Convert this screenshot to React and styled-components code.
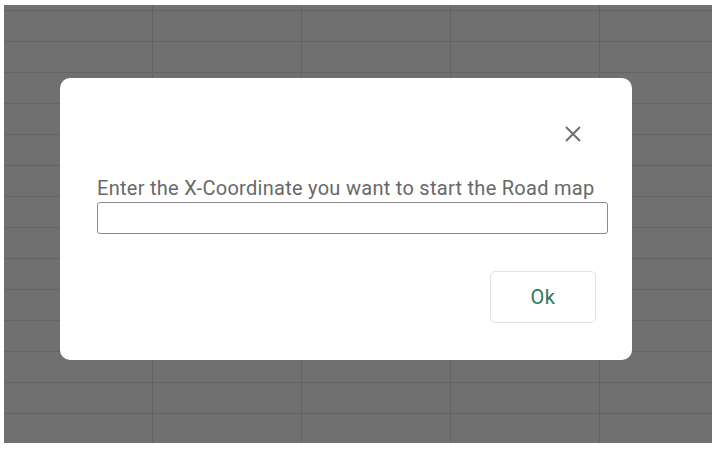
import React from 'react'
import styled, { createGlobalStyle } from 'styled-components'

const GlobalStyle = createGlobalStyle`
  html, body {
    margin: 0;
    padding: 0;
    background: #ffffff;
    font-family: Roboto, "Liberation Sans", sans-serif;
  }
`

const COLS = 5
const ROW_HEIGHTS = [6, ...Array(14).fill(31)]

const App = () => {
  return (
    <Page>
      <GlobalStyle />
      <Sheet>
        <Grid>
          {ROW_HEIGHTS.map((h, r) =>
            Array.from({ length: COLS }).map((_, c) => <Cell key={`${r}-${c}`} />)
          )}
        </Grid>
        <Overlay>
          <Modal>
            <Header>
              <CloseButton aria-label="Close">
                <svg width="18" height="18" viewBox="0 0 18 18">
                  <path d="M2 2 L16 16 M16 2 L2 16" stroke="#6f6f6f" strokeWidth="2" fill="none" />
                </svg>
              </CloseButton>
            </Header>
            <Label htmlFor="xcoord">Enter the X-Coordinate you want to start the Road map</Label>
            <Input id="xcoord" type="text" />
            <Footer>
              <OkButton>Ok</OkButton>
            </Footer>
          </Modal>
        </Overlay>
      </Sheet>
    </Page>
  )
}

const Page = styled.div`
  width: 716px;
  height: 450px;
  padding: 5px 4px 7px 4px;
  box-sizing: border-box;
`

const Sheet = styled.div`
  position: relative;
  width: 708px;
  height: 438px;
  overflow: hidden;
  background: #ffffff;
`

const Grid = styled.div`
  display: grid;
  grid-template-columns: repeat(5, 149px);
  grid-template-rows: ${ROW_HEIGHTS.map((h) => `${h}px`).join(' ')};
`

const Cell = styled.div`
  border-bottom: 1px solid #e4e4e4;
  border-right: 1px solid #e4e4e4;
`

const Overlay = styled.div`
  position: absolute;
  inset: 0;
  background: rgba(0, 0, 0, 0.56);
  padding: 73px 0 0 56px;
  box-sizing: border-box;
`

const Modal = styled.div`
  width: 572px;
  height: 282px;
  box-sizing: border-box;
  background: #ffffff;
  border-radius: 10px;
  padding: 47px 24px 37px 37px;
  display: flex;
  flex-direction: column;
`

const Header = styled.div`
  display: flex;
  justify-content: flex-end;
  padding-right: 26px;
  height: 18px;
`

const CloseButton = styled.button`
  border: none;
  background: none;
  padding: 0;
  width: 18px;
  height: 18px;
  cursor: pointer;
  display: flex;
`

const Label = styled.label`
  margin-top: 34px;
  font-size: 20px;
  line-height: 23px;
  letter-spacing: 0.28px;
  color: #686868;
  white-space: nowrap;
`

const Input = styled.input`
  margin-top: 2px;
  width: 511px;
  height: 32px;
  box-sizing: border-box;
  border: 1px solid #8a8a8a;
  border-radius: 3px;
  outline: none;
  font-family: inherit;
  font-size: 16px;
  padding: 0 8px;
`

const Footer = styled.div`
  display: flex;
  justify-content: flex-end;
  padding-right: 12px;
  margin-top: 37px;
`

const OkButton = styled.button`
  width: 106px;
  height: 52px;
  background: #ffffff;
  border: 1px solid #e2e2e2;
  border-radius: 5px;
  font-family: Roboto, "Liberation Sans", sans-serif;
  font-size: 20px;
  letter-spacing: 0.5px;
  color: #2b7a5f;
  cursor: pointer;
`

export default App
